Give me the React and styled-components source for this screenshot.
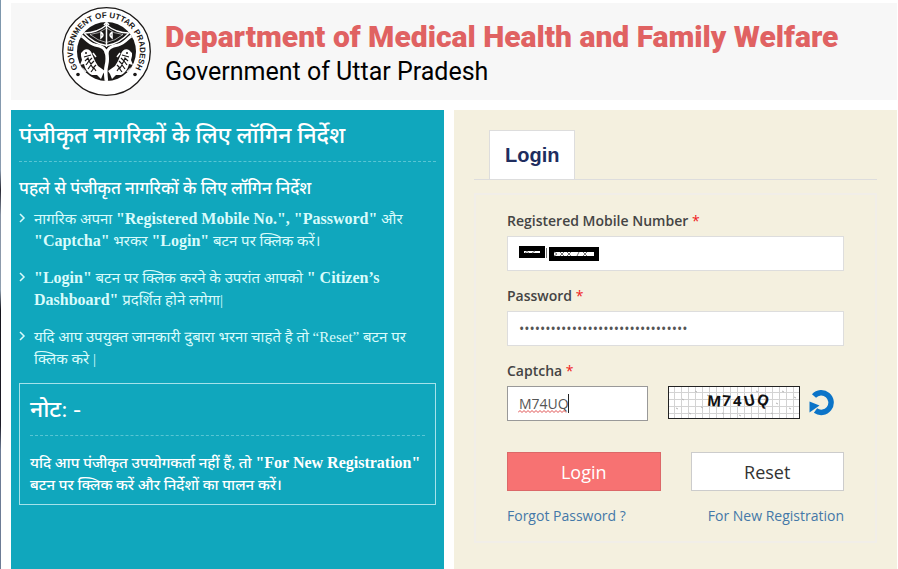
import React, { useState } from 'react';
import styled, { createGlobalStyle } from 'styled-components';

const GlobalStyle = createGlobalStyle`
  * { box-sizing: border-box; }
  body {
    margin: 0;
    background-color: white;
    font-family: 'Open Sans', sans-serif;
    font-size: 14px;
    line-height: 20px;
  }
`;

/* ---------- Page ---------- */
const Page = styled.div`
  display: flex;
  flex-direction: column;
  min-height: 100vh;
  padding: 3px 1px 0 11px;
  background: linear-gradient(#7d97ad 0, #8a9cb0 170px, #2a2a35 190px, #8793a5 215px, #8f9fb0 290px, #14141c 310px, #1c1c28 425px, #6c7c96 450px, #6c7c96 100%) left top / 1px 100% no-repeat;
`;

const Header = styled.header`
  display: flex;
  align-items: flex-start;
  gap: 12px;
  min-height: 97px;
  padding: 4px 0 0 51px;
  background-color: #f7f7f7;
`;

const HeaderText = styled.div`
  padding-top: 9px;
`;

const Department = styled.h1`
  margin: 0;
  font-family: 'Roboto', sans-serif;
  font-weight: 900;
  font-size: 30px;
  line-height: 42px;
  color: #e06262;
`;

const State = styled.p`
  margin: 0;
  font-family: 'Roboto', sans-serif;
  font-size: 25px;
  line-height: 28px;
  color: black;
`;

const Main = styled.main`
  display: grid;
  flex: 1;
  grid-template-columns: 433fr 443fr;
  gap: 10px;
  margin-top: 10px;

  @media (max-width: 700px) {
    grid-template-columns: 1fr;
  }
`;

/* ---------- Instructions ---------- */
const Instructions = styled.section`
  padding: 8px;
  background-color: #10a7bd;
  color: white;
  font-family: 'Liberation Serif', 'Noto Sans Devanagari', 'Lohit Devanagari', serif;
  font-size: 15px;
  line-height: 22px;

  b {
    font-size: 16px;
    line-height: 20px;
  }
`;

const Heading = styled.h2`
  margin: 0 0 16px;
  padding-bottom: 8px;
  border-bottom: 1px dashed #58c5d4;
  font-weight: 500;
  font-size: 23px;
  line-height: 35px;
`;

const SubHeading = styled.h3`
  margin: 0 0 8px;
  font-weight: 500;
  font-size: 17px;
  line-height: 22px;
`;

const Steps = styled.ul`
  margin: 0;
  padding: 0;
  list-style: none;
`;

const Step = styled.li`
  display: flex;
  gap: 8px;
  margin-bottom: 15px;
  color: #d9fbfb;
`;

const Chevron = styled.svg`
  flex: none;
  width: 7px;
  height: 10px;
  margin-top: 5px;
`;

const Note = styled.div`
  margin-top: -2px;
  padding: 8px 10px;
  border: 1px solid #a5e2ea;
`;

const NoteText = styled.p`
  margin: 0;
  font-weight: 500;
`;

/* ---------- Login form ---------- */
const LoginPanel = styled.section`
  padding: 20px 20px 27px;
  background-color: #f4f0df;
`;

const Tabs = styled.div`
  display: flex;
  padding-left: 15px;
  border-bottom: 1px solid #dddddd;
`;

const Tab = styled.button`
  height: 49px;
  padding: 0 15px;
  border: 1px solid #dddddd;
  border-bottom: 0;
  background-color: white;
  font-family: 'Liberation Sans', sans-serif;
  font-weight: 700;
  font-size: 20px;
  color: #1f2d5f;
`;

const Form = styled.form`
  margin-top: 13px;
  padding: 16px 31px 15px;
  border: 2px solid #f1eee8;
`;

const Field = styled.div`
  margin-bottom: 15px;
`;

const Label = styled.label`
  display: block;
  margin-bottom: 5px;
  font-weight: 600;
  color: #444444;
`;

const Star = styled.span`
  font-weight: 400;
  color: #f02020;
`;

const InputWrap = styled.div`
  position: relative;
  width: ${(props) => props.$width || '100%'};
`;

const Input = styled.input`
  display: block;
  width: 100%;
  height: 35px;
  padding: 0 11px;
  border: 1px solid ${(props) => (props.$active ? '#999999' : '#dddddd')};
  outline: none;
  background-color: white;
  font-family: 'Open Sans', sans-serif;
  font-size: 14px;
  color: #555555;
`;

/* sits over the text of an input */
const Overlay = styled.svg`
  position: absolute;
  left: 11px;
  top: 7px;
  pointer-events: none;
`;

const CaptchaRow = styled.div`
  display: flex;
  align-items: flex-start;
`;

const CaptchaImage = styled.svg`
  flex: none;
  width: 132px;
  height: 33px;
  margin-left: 20px;
`;

const Refresh = styled.button`
  flex: none;
  width: 26px;
  height: 26px;
  margin: 4px 0 0 9px;
  padding: 0;
  border: 0;
  background: none;
`;

const Actions = styled.div`
  display: grid;
  grid-template-columns: 1fr 1fr;
  gap: 30px;
  margin-top: 31px;
`;

const Button = styled.button`
  height: 39px;
  border: 1px solid ${(props) => (props.$primary ? '#dc6868' : '#cccccc')};
  background-color: ${(props) => (props.$primary ? '#f77272' : 'white')};
  font-family: 'Open Sans', sans-serif;
  font-size: 18px;
  color: ${(props) => (props.$primary ? 'white' : '#333333')};
`;

const Links = styled.div`
  display: flex;
  justify-content: space-between;
  margin-top: 15px;
`;

const Link = styled.a`
  color: #4478a8;
  text-decoration: none;
`;

/* ---------- Drawings ---------- */
const EmblemDrawing = styled.svg`
  flex: none;
  width: 91px;
  height: 91px;
`;

const Fish = () => (
  <g>
    <path d="M19 46 L22 43 C25 41 29 43 30 47 L33 54 L36 59 L43 64 L41 67 L39 72 L35 68 L30 68 C26 66 23 62 22 57 L18 58 L20 53 L19 49Z" fill="white" />
    <path d="M22 50l7-2M23 54l3-3 1 3 3-3M24 58l3-4 2 3 3-3M26 62l3-4 2 3 3-3M29 65l3-4 2 3" stroke="#1b1918" strokeWidth="1.200" fill="none" />
    <circle cx="24" cy="46" r="1" fill="#1b1918" />
    <path d="M20 61l4 4M31 46l3 4" stroke="white" strokeWidth="1.500" />
  </g>
);

const Emblem = () => (
  <EmblemDrawing viewBox="0 0 91 91" role="img" aria-label="Government of Uttar Pradesh">
    <defs>
      <path id="ring" d="M16 62 A33.500 33.500 0 1 1 73 62" />
      <clipPath id="disc"><circle cx="44.500" cy="44.500" r="29.500" /></clipPath>
    </defs>
    <circle cx="44.500" cy="44.500" r="43.800" fill="white" stroke="#1b1918" strokeWidth="1.300" />
    <circle cx="44.500" cy="44.500" r="29.500" fill="#1b1918" />
    <g clipPath="url(#disc)">
      <path d="M14 27 C22 27 24 36 33 38 C40 39 44 42 44.500 47 C45 42 49 39 56 38 C65 36 67 27 75 27" fill="none" stroke="white" strokeWidth="3" />
      <path d="M44.500 45 Q46 52 44.500 58 T44.500 75" fill="none" stroke="white" strokeWidth="3.600" />
      <path d="M22 26 Q35 26 44.500 18 Q54 26 67 26 Q57 37 44.500 38.500 Q32 37 22 26Z" fill="#1b1918" stroke="white" strokeWidth="1.300" />
      <path d="M28 27.500 Q37 27 44.500 21 Q52 27 61 27.500 Q53 34 44.500 35.500 Q36 34 28 27.500Z" fill="none" stroke="white" strokeWidth="0.600" />
      <path d="M44.500 16V40M42 18l2.500-3 2.500 3M39 25v6q4-3 0-6M50 25v6q-4-3 0-6" fill="none" stroke="white" strokeWidth="1.500" />
      <Fish />
      <g transform="translate(89 0) scale(-1 1)"><Fish /></g>
    </g>
    <text fontFamily="Liberation Sans, sans-serif" fontWeight="700" fontSize="8" fill="#1b1918">
      <textPath href="#ring" startOffset="50%" textAnchor="middle">GOVERNMENT OF UTTAR PRADESH</textPath>
    </text>
    <circle cx="16" cy="67.500" r="1.800" fill="#1b1918" />
    <circle cx="73" cy="67.500" r="1.800" fill="#1b1918" />
  </EmblemDrawing>
);

const StepItem = ({ children }) => (
  <Step>
    <Chevron viewBox="0 0 7 10">
      <path d="M1 1l4 4-4 4" fill="none" stroke="currentColor" strokeWidth="1.500" />
    </Chevron>
    <div>{children}</div>
  </Step>
);

const specks = [[8, 22], [14, 13], [21, 27], [27, 5], [33, 21], [39, 9], [88, 5], [96, 13], [103, 27], [114, 5], [121, 22], [126, 11], [71, 29], [54, 27], [108, 17]];
const letters = [['M', 39, 20, 4], ['7', 54, 20, 4], ['4', 65, 20, 0], ['U', 76, 20, -14], ['Q', 89, 19, 18]];

const CaptchaDrawing = () => (
  <CaptchaImage viewBox="0 0 132 33" role="img" aria-label="Captcha">
    <defs>
      <pattern id="grid" width="7" height="7" patternUnits="userSpaceOnUse">
        <path d="M0 6.500H7M6.500 0V7" stroke="#d3d3d3" />
      </pattern>
    </defs>
    <rect x="0.500" y="0.500" width="131" height="32" fill="white" />
    <rect x="0.500" y="0.500" width="131" height="32" fill="url(#grid)" stroke="#222222" />
    {specks.map(([x, y]) => (
      <path key={`${x}-${y}`} d={`M${x} ${y}l2 1`} stroke="#b5b5b5" />
    ))}
    {letters.map(([char, x, y, angle]) => (
      <text key={char} x={x} y={y} transform={`rotate(${angle} ${x + 5} ${y - 5})`} fontFamily="Open Sans, sans-serif" fontWeight="700" fontSize="15" fill="#111111">{char}</text>
    ))}
  </CaptchaImage>
);

const App = () => {
  const [captcha, setCaptcha] = useState('M74UQ');

  return (
    <Page>
      <GlobalStyle />
      <Header>
        <Emblem />
        <HeaderText>
          <Department>Department of Medical Health and Family Welfare</Department>
          <State>Government of Uttar Pradesh</State>
        </HeaderText>
      </Header>

      <Main>
        <Instructions lang="hi">
          <Heading>पंजीकृत नागरिकों के लिए लॉगिन निर्देश</Heading>
          <SubHeading>पहले से पंजीकृत नागरिकों के लिए लॉगिन निर्देश</SubHeading>
          <Steps>
            <StepItem>
              नागरिक अपना <b>"Registered Mobile No.", "Password"</b> और <br />
              <b>"Captcha"</b> भरकर <b>"Login"</b> बटन पर क्लिक करें।
            </StepItem>
            <StepItem>
              <b>"Login"</b> बटन पर क्लिक करने के उपरांत आपको <b>" Citizen’s <br />
              Dashboard"</b> प्रदर्शित होने लगेगा|
            </StepItem>
            <StepItem>
              यदि आप उपयुक्त जानकारी दुबारा भरना चाहते है तो “Reset” बटन पर <br />
              क्लिक करे |
            </StepItem>
          </Steps>
          <Note>
            <Heading>नोट: -</Heading>
            <NoteText>
              यदि आप पंजीकृत उपयोगकर्ता नहीं हैं, तो <b>"For New Registration"</b> <br />
              बटन पर क्लिक करें और निर्देशों का पालन करें।
            </NoteText>
          </Note>
        </Instructions>

        <LoginPanel>
          <Tabs>
            <Tab type="button">Login</Tab>
          </Tabs>
          <Form onSubmit={(e) => e.preventDefault()}>
            <Field>
              <Label htmlFor="mobile">Registered Mobile Number <Star>*</Star></Label>
              <InputWrap>
                <Input id="mobile" type="tel" />
                {/* the number is blacked out */}
                <Overlay width="82" height="20" viewBox="0 0 82 20">
                  <path d="M1 3h26v12H1zM31 4h50v14H31z" fill="black" />
                  <path d="M6 8h16v2H6zM36 9h40v4H36z" fill="white" />
                  <path d="M36 9l3 2-3 2M42 9l4 4M46 9l-4 4M49 9l4 4M53 9l-4 4M61 9l-2 4M65 9l4 4M69 9l-4 4M7 10q2-3 4 0M14 10l3-2M28.500 5v10" fill="none" stroke="#777777" />
                </Overlay>
              </InputWrap>
            </Field>
            <Field>
              <Label htmlFor="password">Password <Star>*</Star></Label>
              <InputWrap>
                <Input id="password" type="password" defaultValue={'x'.repeat(32)} />
              </InputWrap>
            </Field>
            <Label htmlFor="captcha">Captcha <Star>*</Star></Label>
            <CaptchaRow>
              <InputWrap $width="141px">
                <Input id="captcha" $active spellCheck={false} value={captcha} onChange={(e) => setCaptcha(e.target.value)} />
                <Overlay width="54" height="22" viewBox="0 0 54 22">
                  <path d={`M0 19.500${'l2 -2l2 2'.repeat(12)}`} fill="none" stroke="#e05050" />
                  <path d="M50.500 1v19" stroke="#222222" />
                </Overlay>
              </InputWrap>
              <CaptchaDrawing />
              <Refresh type="button" aria-label="Refresh captcha">
                <svg width="26" height="26" viewBox="0 0 26 26">
                  <path d="M5 6 A9.800 9.800 0 1 1 6.500 20.500" fill="none" stroke="#0b74c8" strokeWidth="5.500" />
                  <path d="M0.500 11.500L10.500 15.500L0.500 22.500Z" fill="#0b74c8" />
                </svg>
              </Refresh>
            </CaptchaRow>
            <Actions>
              <Button type="submit" $primary>Login</Button>
              <Button type="reset">Reset</Button>
            </Actions>
            <Links>
              <Link href="#forgot">Forgot Password ?</Link>
              <Link href="#register">For New Registration</Link>
            </Links>
          </Form>
        </LoginPanel>
      </Main>
    </Page>
  );
};

export default App;
